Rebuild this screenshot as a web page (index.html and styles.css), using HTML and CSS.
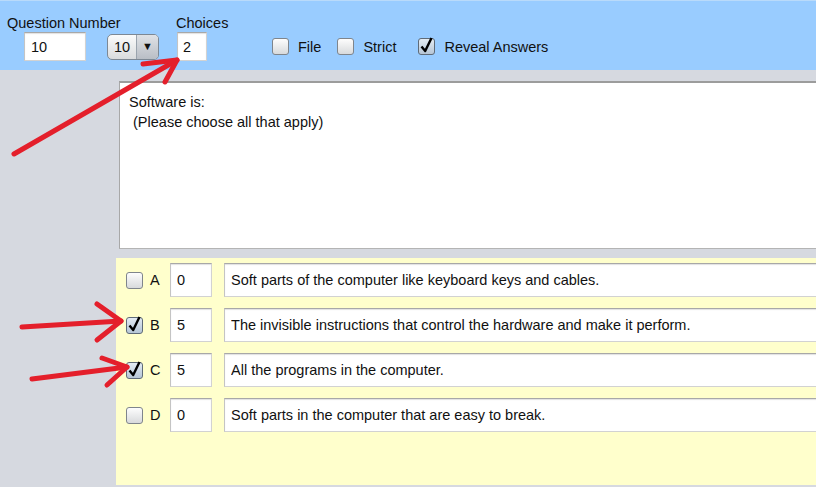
FILE: index.html
```html
<!DOCTYPE html>
<html lang="en">
<head>
    <meta charset="UTF-8">
    <title>Question Editor</title>
    <link rel="stylesheet" href="styles.css">
</head>
<body>

    <!-- Top toolbar -->
    <div class="toolbar">
        <div class="field qnum">
            <label>Question Number</label>
            <div class="controls">
                <input class="text-box num-box" type="text" value="10">
                <div class="spinner"><span class="spin-value">10</span><span class="spin-arrow">&#9660;</span></div>
            </div>
        </div>
        <div class="field choices">
            <label>Choices</label>
            <input class="text-box choice-box" type="text" value="2">
        </div>
        <div class="options">
            <div class="opt"><span class="check"></span>File</div>
            <div class="opt"><span class="check"></span>Strict</div>
            <div class="opt reveal"><span class="check checked"><svg viewBox="0 0 17 17"><path d="M3.5 9.5 L7.2 14 L13.5 1"/></svg></span>Reveal Answers</div>
        </div>
    </div>

    <div class="main">
        <!-- Question text -->
        <div class="question-box">Software is:
 (Please choose all that apply)</div>

        <!-- Answers -->
        <div class="answers">
            <div class="answer-row">
                <span class="check"></span>
                <span class="letter">A</span>
                <input class="text-box score-box" type="text" value="0">
                <input class="text-box answer-box" type="text" value="Soft parts of the computer like keyboard keys and cables.">
            </div>
            <div class="answer-row">
                <span class="check checked"><svg viewBox="0 0 17 17"><path d="M3.5 9.5 L7.2 14 L13.5 1"/></svg></span>
                <span class="letter">B</span>
                <input class="text-box score-box" type="text" value="5">
                <input class="text-box answer-box" type="text" value="The invisible instructions that control the hardware and make it perform.">
            </div>
            <div class="answer-row">
                <span class="check checked"><svg viewBox="0 0 17 17"><path d="M3.5 9.5 L7.2 14 L13.5 1"/></svg></span>
                <span class="letter">C</span>
                <input class="text-box score-box" type="text" value="5">
                <input class="text-box answer-box" type="text" value="All the programs in the computer.">
            </div>
            <div class="answer-row">
                <span class="check"></span>
                <span class="letter">D</span>
                <input class="text-box score-box" type="text" value="0">
                <input class="text-box answer-box" type="text" value="Soft parts in the computer that are easy to break.">
            </div>
        </div>
    </div>

    <!-- Hand drawn red arrows over the screenshot -->
    <svg class="marks" width="816" height="487" viewBox="0 0 816 487">
        <g>
            <path d="M14 154 L177 60"/>
            <path d="M143 64 L177 60 L165 82"/>
            <path d="M22 327 L121 321"/>
            <path d="M97 304 L121 321 L97 340"/>
            <path d="M32 379 L127 367"/>
            <path d="M102 358 L127 367 L107 385"/>
        </g>
    </svg>

</body>
</html>
```

FILE: styles.css
```css
html, body {
    margin: 0;
    padding: 0;
    overflow: hidden;
}

body {
    font-family: "Liberation Sans", Arial, sans-serif;
    font-size: 14.5px;
    color: #111;
    background: #d6d9e0;
    width: 816px;
    height: 487px;
    position: relative;
}

/* toolbar */
.toolbar {
    height: 70px;
    box-sizing: border-box;
    background: #99ccff;
    border-top: 1px solid #b9dafa;
    padding: 15px 0 9px 7px;
    display: flex;
    align-items: flex-end;
}

.field {
    display: flex;
    flex-direction: column;
}

.field label {
    line-height: 17px;
    height: 17px;
    white-space: nowrap;
}

.qnum {
    width: 152px;
}

.choices {
    width: 60px;
    margin-left: 17px;
}

.controls {
    display: flex;
    align-items: center;
}

.text-box {
    box-sizing: border-box;
    font-family: inherit;
    font-size: 14.5px;
    color: #111;
    background: #fff;
    border: 1px solid #d2d2d2;
    border-top-color: #a8a8a8;
    border-left-color: #c4c4c4;
    box-shadow: inset 0 1px 1px rgba(0, 0, 0, 0.12);
    padding: 0 6px;
    margin: 0;
    outline: none;
}

.num-box {
    width: 62px;
    height: 29px;
    margin-left: 17px;
}

.choice-box {
    width: 30px;
    height: 29px;
    margin-left: 1px;
    padding-left: 5px;
}

.spinner {
    margin-left: 21px;
    width: 52px;
    height: 26px;
    box-sizing: border-box;
    border: 1px solid #7d8894;
    border-radius: 5px;
    background: linear-gradient(#fbfbfb, #d9dbdd);
    display: flex;
    overflow: hidden;
}

.spin-value {
    flex: 1;
    line-height: 24px;
    padding-left: 6px;
}

.spin-arrow {
    width: 21px;
    border-left: 1px solid #9aa3ad;
    background: linear-gradient(#dfe2e6, #b9bec5);
    font-size: 11px;
    text-align: center;
    line-height: 22px;
}

/* option checkboxes */
.options {
    display: flex;
    align-items: center;
    height: 29px;
    margin-left: 36px;
    gap: 16px;
}

.opt {
    display: flex;
    align-items: center;
    gap: 9px;
}

.opt.reveal {
    margin-left: 6px;
}

.check {
    display: inline-block;
    position: relative;
    width: 17px;
    height: 17px;
    box-sizing: border-box;
    border: 1px solid #7f858c;
    border-radius: 3px;
    background: linear-gradient(#fdfdfd, #d8dadc);
    flex-shrink: 0;
}

.check.checked {
    background: linear-gradient(#e4ecf4, #b6c6d6);
    border-color: #5f6b78;
}

.check svg {
    position: absolute;
    left: -1px;
    top: -2px;
    width: 17px;
    height: 17px;
    overflow: visible;
}

.check svg path {
    fill: none;
    stroke: #000;
    stroke-width: 2.4;
    stroke-linejoin: round;
}

/* main area */
.main {
    padding: 11px 0 0 119px;
}

.question-box {
    width: 720px;
    height: 168px;
    box-sizing: border-box;
    background: #fff;
    border: 1px solid #b4b4b4;
    border-top: 2px solid #9c9c9c;
    border-left-color: #a8a8a8;
    padding: 9px 9px;
    line-height: 20px;
    white-space: pre-wrap;
}

.answers {
    margin: 9px 0 0 -3px;
    width: 720px;
    height: 227px;
    box-sizing: border-box;
    background: #ffffcc;
    padding: 5px 0 0 10px;
    display: flex;
    flex-direction: column;
    gap: 11px;
}

.answer-row {
    display: flex;
    align-items: center;
    height: 34px;
}

.letter {
    width: 21px;
    padding-left: 7px;
}

.score-box {
    width: 42px;
    height: 34px;
}

.answer-box {
    width: 640px;
    height: 34px;
    margin-left: 12px;
}

/* red annotation arrows */
.marks {
    position: absolute;
    left: 0;
    top: 0;
    pointer-events: none;
}

.marks path {
    fill: none;
    stroke: #e41f2b;
    stroke-width: 5;
    stroke-linecap: round;
    stroke-linejoin: round;
}
```
